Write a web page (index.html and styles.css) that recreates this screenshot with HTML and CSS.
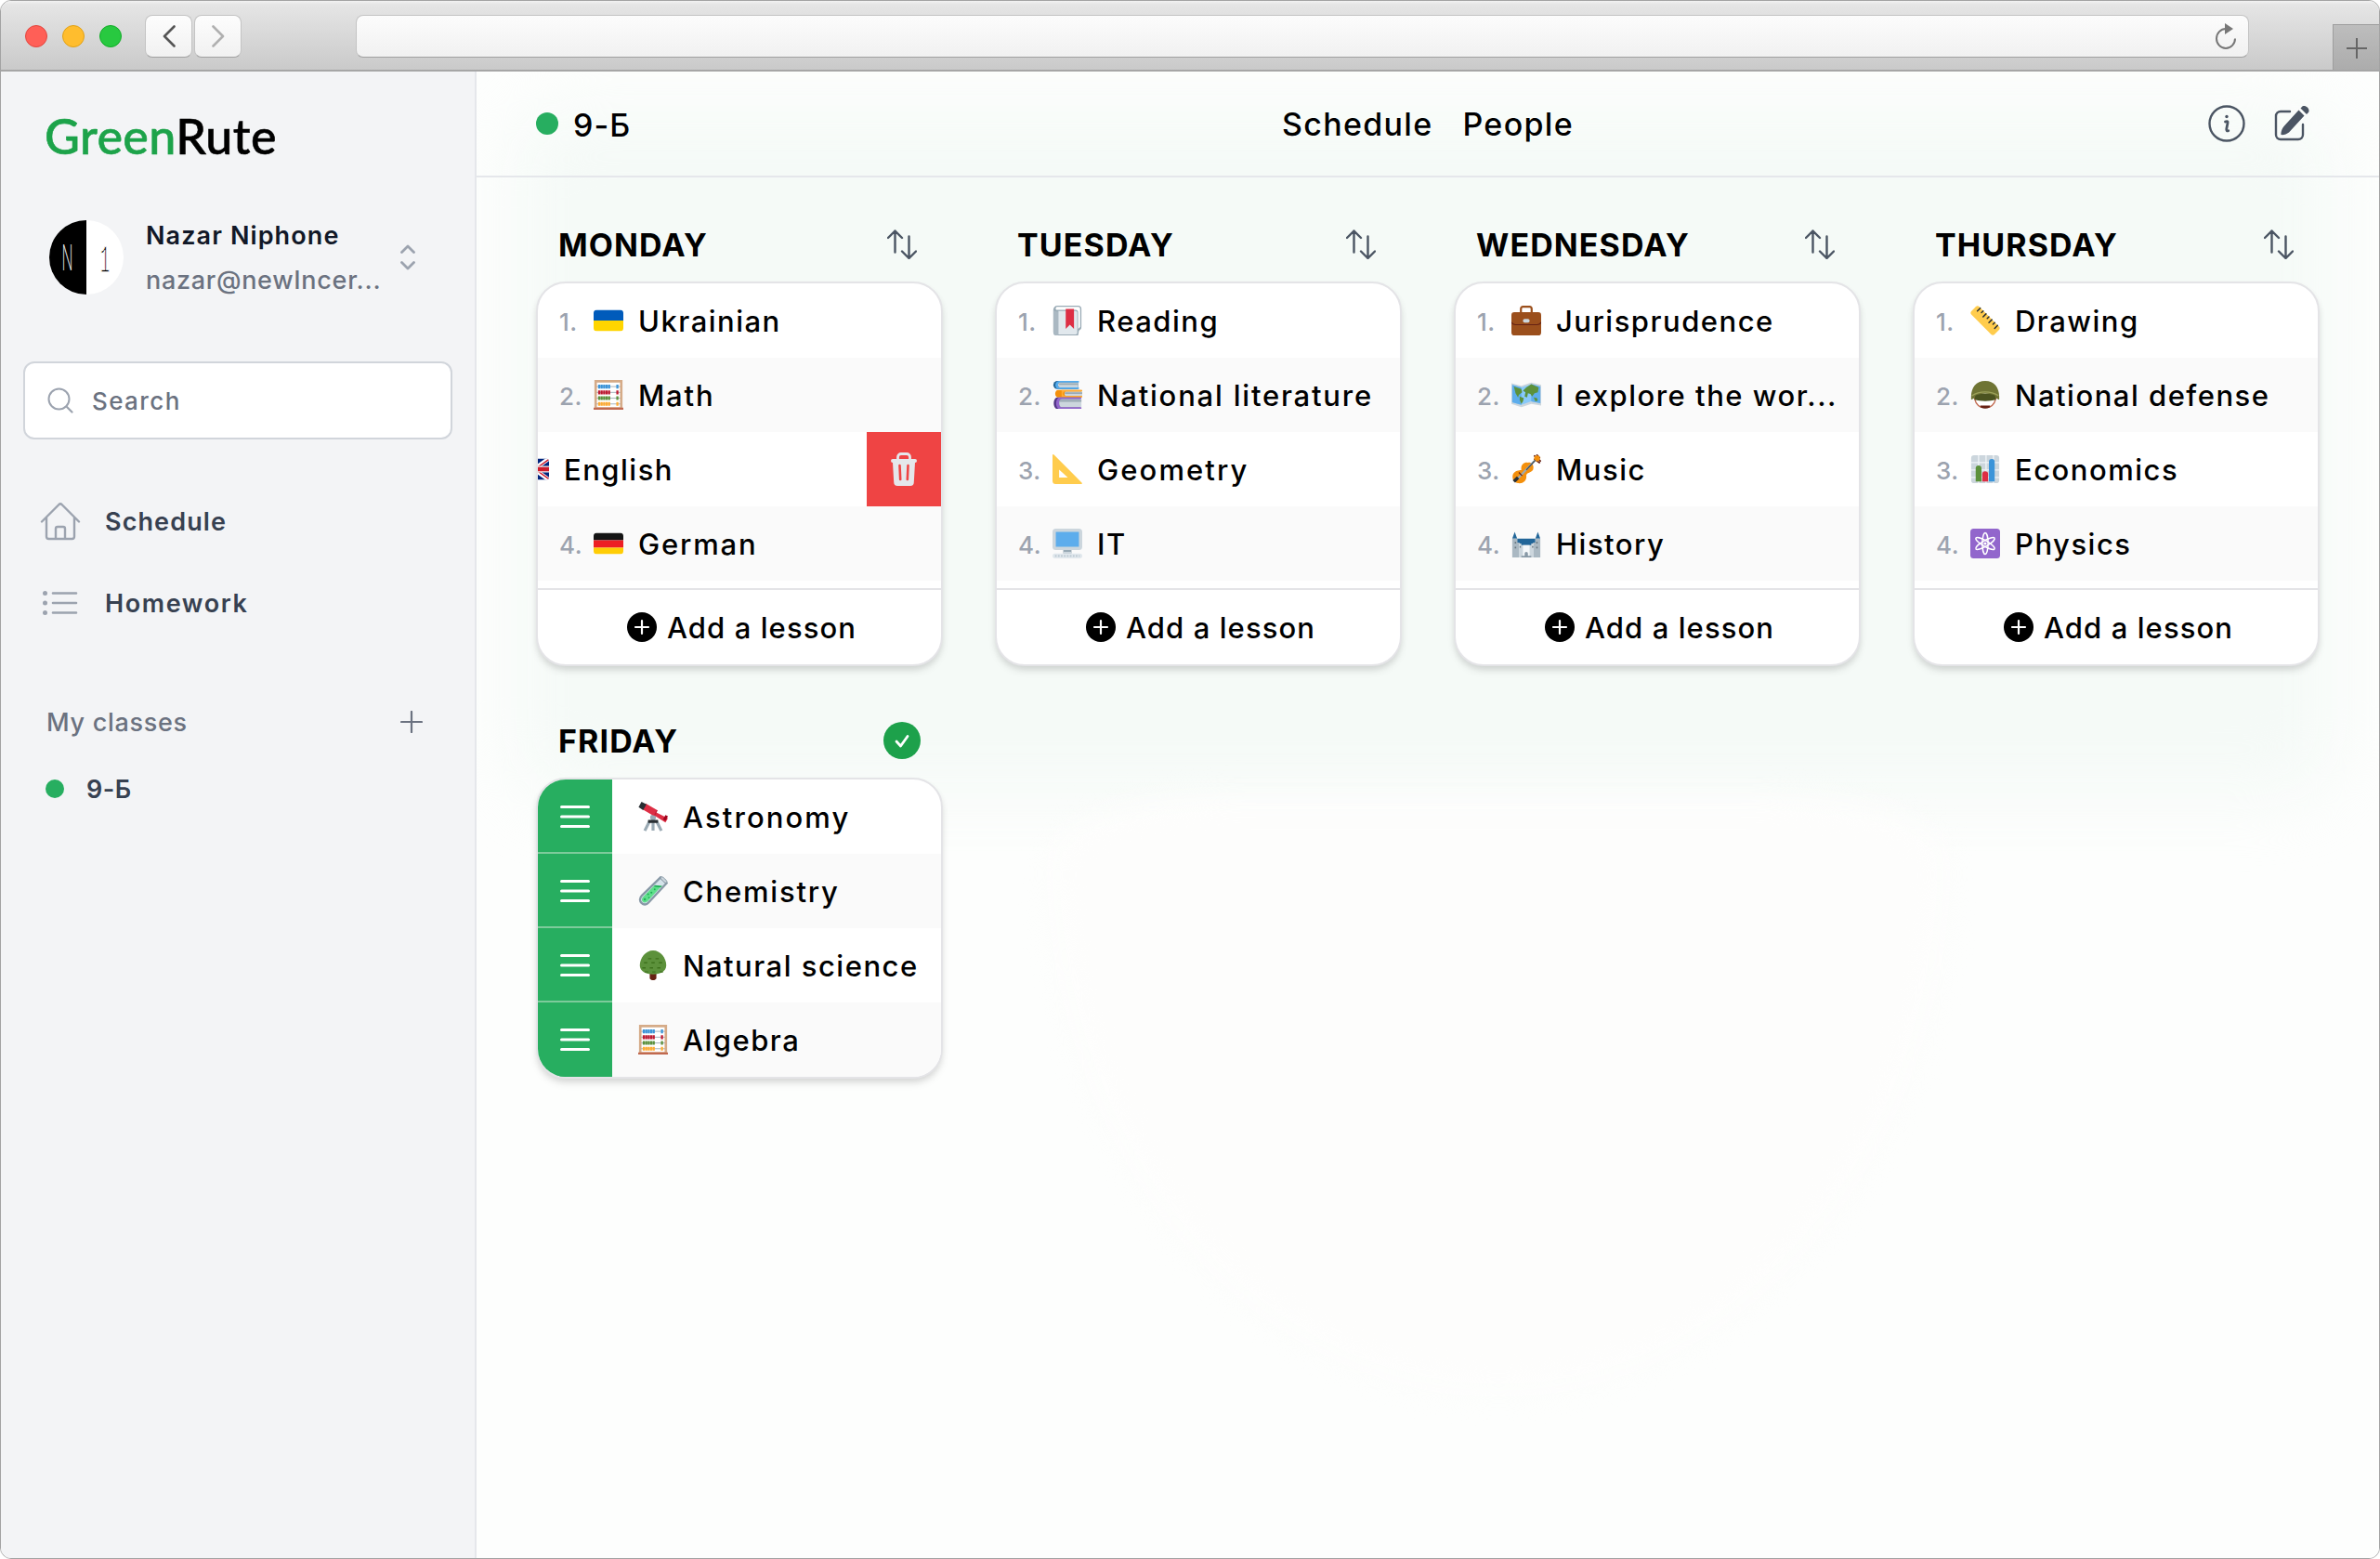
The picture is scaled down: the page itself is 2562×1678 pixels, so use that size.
FILE: index.html
```html
<!DOCTYPE html>
<html lang="en">
<head>
<meta charset="utf-8">
<title>GreenRute</title>
<link rel="stylesheet" href="styles.css">
</head>
<body>
<svg class="sprite" aria-hidden="true">
  <defs>
    <clipPath id="flag"><rect y="5" width="36" height="26" rx="4"/></clipPath>
    <symbol id="ua" viewBox="0 0 36 36"><g clip-path="url(#flag)"><path fill="#005bbb" d="M0 5h36v13H0z"/><path fill="#ffd500" d="M0 18h36v13H0z"/></g></symbol>
    <symbol id="de" viewBox="0 0 36 36"><g clip-path="url(#flag)"><path fill="#141414" d="M0 5h36v9H0z"/><path fill="#ed1f24" d="M0 14h36v9H0z"/><path fill="#ffcd05" d="M0 23h36v8H0z"/></g></symbol>
    <symbol id="gb" viewBox="0 0 36 36"><g clip-path="url(#flag)"><path fill="#00247d" d="M0 5h36v26H0z"/><path stroke="#fff" stroke-width="5" d="M0 5l36 26M36 5L0 31"/><path stroke="#cf1b2b" stroke-width="1.6" d="M0 6l17 12M36 6L19 18M0 30l17-12M36 30L19 18"/><path stroke="#eee" stroke-width="8" d="M18 5v26M0 18h36"/><path stroke="#cf1b2b" stroke-width="5" d="M18 5v26M0 18h36"/></g></symbol>
    <symbol id="abacus" viewBox="0 0 36 36">
      <path fill="#fff" d="M3 3h30v30H3z"/>
      <path stroke="#9aaab4" stroke-width="1" d="M3 8h30M3 15h30M3 22h30M3 29h30"/>
      <path fill="#d5ab88" d="M1 0h34v35H1zM4 3v30h28V3z" fill-rule="evenodd"/>
      <path fill="#c1694f" d="M0 33.500h36V36H0z"/>
      <g stroke-width="4.600" stroke-dasharray="2.600 .400"><path stroke="#3b94d9" d="M5.500 8H20.500M27.500 8h3"/><path stroke="#be1931" d="M5.500 15H20.500M27.500 15h3"/><path stroke="#5c913b" d="M5.500 22H20.500M27.500 22h3"/><path stroke="#ffac33" d="M5.500 29H20.500M27.500 29h3"/></g>
    </symbol>
    <symbol id="bookmark" viewBox="0 0 36 36">
      <path fill="#99aab5" d="M6 0h25a4 4 0 0 1 4 4v22a4 4 0 0 1-3 4l-1 6H5a4 4 0 0 1-4-4V5a5 5 0 0 1 5-5z"/>
      <path fill="#fff" d="M6 1.500h25a2.500 2.500 0 0 1 2.500 2.500v22l-2.500 2V8a3 3 0 0 0-3-3H4.500a2 2 0 0 1 1.500-3.500z"/>
      <path fill="#e1e8ed" d="M7 6.500h21a2 2 0 0 1 2 2V33a2 2 0 0 1-2 2H7z"/><path fill="#aab8c2" d="M1 5c1 2 3 2 6 2v29H5a4 4 0 0 1-4-4z"/>
      <path fill="#dd2e44" d="M16 4h10v24l-5-5-5 5z"/>
    </symbol>
    <symbol id="books" viewBox="0 0 36 36">
      <path fill="#226699" d="M6 1h25v10H6a5 5 0 0 1 0-10z"/><path fill="#55acee" d="M8 1h24v2H9c-3 0-3 6 0 6h23v2H8C2 11 2 1 8 1z"/><path fill="#ccd6dd" d="M9 3h22v6H9c-3 0-3-6 0-6z"/><path fill="#9aaab4" d="M8 4h23v2H8z"/>
      <path fill="#f4900c" d="M7 12h28v9H7c-5 0-5-9 0-9z"/><path fill="#ffac33" d="M11 12h25v2H15c-3 0-3 5 0 5h21v2H11z"/><path fill="#ccd6dd" d="M16 14h20v5H16c-2 0-2-5 0-5z"/><path fill="#9aaab4" d="M15 15h21v2H15z"/>
      <path fill="#553788" d="M6 21h28v14H6c-6 0-6-14 0-14z"/><path fill="#9266cc" d="M9 21h26v2H11c-4 0-4 10 0 10h24v2H9c-6 0-6-14 0-14z"/><path fill="#ccd6dd" d="M11 23h24v10H11c-4 0-4-10 0-10z"/><path fill="#9aaab4" d="M9 24h26v2.500H8.500z"/>
    </symbol>
    <symbol id="triangle" viewBox="0 0 36 36"><path fill="#ffcc4d" fill-rule="evenodd" d="M0 1C0-.2 1-.3 1.800.600l33.600 33.600c.9.900.6 1.800-.6 1.800H4a4 4 0 0 1-4-4zM8 18.500V28h10.500z"/></symbol>
    <symbol id="computer" viewBox="0 0 36 36"><path fill="#99aab5" d="M13 24h10v6H13z"/><rect fill="#ccd6dd" width="36" height="26" rx="4"/><path fill="#5dadec" d="M4 4h28v18H4z"/><path fill="#ccd6dd" d="M13 28h10v2H13z"/><rect y="30" width="36" height="6" rx="3" fill="#e1e8ed"/><path stroke="#b8c5cf" stroke-width="2" stroke-dasharray="2 1.600" d="M3 33h30"/></symbol>
    <symbol id="briefcase" viewBox="0 0 36 36"><path fill="none" stroke="#9b4f1c" stroke-width="2.500" d="M11.500 9V4a2.500 2.500 0 0 1 2.500-2.700h8A2.500 2.500 0 0 1 24.500 4v5"/><rect y="8" width="36" height="28" rx="3.500" fill="#9b4f1c"/><path fill="none" stroke="#662113" stroke-width="1.200" d="M0 20c1 2.500 3 3 5 3h26c2 0 4-.5 5-3"/><rect x="14" y="16" width="8" height="4.500" rx="2" fill="#ccd6dd"/></symbol>
    <symbol id="map" viewBox="0 0 36 36"><path fill="#ccd6dd" d="M0 4l12 3 12-4 12 3v25l-12-2-12 4-12-4z"/><path fill="#88c9f9" d="M1 6l11 3 12-4 11 3v20l-11-2-12 4-11-3z"/><path fill="#5dadec" d="M1 6l11 3v21L1 27zM24 5l11 3v20l-11-2z"/><path fill="#5c913b" d="M3 8l9 3 1 4-4 3-1 3-3-5zM10 20l5 2-1 4-2 3-2-5zM18 9l6-4 9 4-1 6-4 1-3 4-2-3-3-1-1 5-3-1 1-5-3-2zM27 21l4 1 1 3-3 1z"/></symbol>
    <symbol id="violin" viewBox="0 0 36 36"><path stroke="#662113" stroke-width="2" stroke-linecap="round" d="M28 2l7 6M31 1l3 3M28 6l6 4"/><path fill="#f4900c" d="M12 19c-1-6 3-10 8-9 5-1 8 4 6 9-2 3-7 3-8 6 1 7-4 11-10 10-5-1-8-6-6-11 2-4 7-5 10-5z"/><circle cx="31" cy="5" r="3.500" fill="#f4900c"/><path stroke="#99aab5" stroke-width="2.400" d="M7 30L28 8"/><path stroke="#4b545a" stroke-width="1.600" d="M18 19L29 7"/><path stroke="#292f33" stroke-width="4" d="M3 33l5-5"/><path stroke="#662113" stroke-width="1.400" d="M9 22l4 4"/></symbol>
    <symbol id="castle" viewBox="0 0 36 36"><path fill="#269" d="M1 12L4 4l3 8zM29 12l3-8 3 8zM7 12h22v7H7z"/><path fill="#aab8c2" d="M1 12h6v5h3v18H1zM29 12h6v23h-9V17h3z"/><path fill="#ccd6dd" d="M9 18h18v17H9z"/><path fill="#269" d="M12 17h12v3H12z"/><path fill="#f5f8fa" d="M14 20h8v15h-8z"/><path fill="#66757f" d="M4 16h1.800v2H4zM30 16h1.800v2H30zM4 22h1.800v2H4zM30 22h1.800v2H30zM10 21h1.500v2H10zM25 21h1.500v2H25z"/><path fill="#8899a6" d="M16 35v-5a2 2 0 0 1 4 0v5zM12 33h12v2H12z"/></symbol>
    <symbol id="ruler" viewBox="0 0 36 36"><path fill="#ffcc4d" d="M1.500 6.500l5-5c1.500-1.500 3-1.500 4.500 0L34.500 25c1.500 1.500 1.500 3 0 4.500l-5 5c-1.500 1.500-3 1.500-4.500 0L1.500 11c-1.500-1.500-1.500-3 0-4.500z"/><path stroke="#292f33" stroke-width="1.700" stroke-linecap="round" d="M12 3L8.500 6.500M15.500 6.500l-2 2M19 10l-3.500 3.500M22.500 13.500l-2 2M26 17l-3.500 3.500M29.500 20.500l-2 2M33 24l-3.500 3.500"/></symbol>
    <symbol id="helmet" viewBox="0 0 36 36"><path fill="#fff" stroke="#c1694f" stroke-width="1.500" d="M5 19c0 8 4 12 8 14h10c4-2 8-6 8-14"/><path fill="#4b5320" d="M5 17h26v7c-8 2-18 2-26 0z"/><path fill="#6f7434" d="M1 20C1 9 7 1 18 1s17 8 17 19v4l-4-2c-1-3-2-4-3-4-7-2-13-2-20 0-1 0-2 1-3 4l-4 2z"/><path fill="none" stroke="#9ba05a" stroke-width="1.500" d="M2 19c9-6 23-6 32 0"/><path fill="#662113" d="M12 31h12l-1 2.500c-3 1.500-7 1.500-10 0z"/></symbol>
    <symbol id="chart" viewBox="0 0 36 36"><rect x="1" y="1" width="34" height="34" rx="3.500" fill="#ccd6dd"/><path stroke="#f0f4f7" stroke-width="1.500" d="M1 10h34M1 19h34M1 28h34M10 1v34M19 1v34M28 1v34"/><path fill="#5c913b" d="M6.500 33V17a3 3 0 0 1 7 0v16z"/><path fill="#dd2e44" d="M14.500 33v-9a3 3 0 0 1 7 0v9z"/><path fill="#3b94d9" d="M22.500 33V9a3 3 0 0 1 7 0v24z"/></symbol>
    <symbol id="atom" viewBox="0 0 36 36"><rect width="36" height="36" rx="4" fill="#9266cc"/><g fill="none" stroke="#fff" stroke-width="1.700"><ellipse cx="18" cy="18" rx="3.500" ry="13"/><ellipse cx="18" cy="18" rx="3.500" ry="13" transform="rotate(60 18 18)"/><ellipse cx="18" cy="18" rx="3.500" ry="13" transform="rotate(120 18 18)"/></g><circle cx="18" cy="18" r="1.800" fill="#fff"/></symbol>
    <symbol id="telescope" viewBox="0 0 36 36"><path stroke="#9aaab4" stroke-width="3.600" d="M14 23L8 35M18 22v13M22 23l6 12"/><circle cx="18" cy="19" r="3.500" fill="#9aaab4"/><path fill="#292f33" d="M12 22h12v3.500H12z"/><path fill="#dd2e44" d="M9 2l14 8-1 3 14 7-3 5-13-8-3-1-12-7z"/><path fill="#a0041e" d="M33 16l3 1.500-3 5.500-3-1.500z"/><path stroke="#be1931" stroke-width="1.200" d="M23 10l-3 6"/><path fill="#292f33" d="M4 0l6 3-4 7-5.500-3.500z"/></symbol>
    <symbol id="tube" viewBox="0 0 36 36"><path fill="#d5e3ea" stroke="#8899a6" stroke-width="2.600" d="M27 1.500l7.500 7-22 23.500c-2.500 3-6 3-8.500.500s-2.500-6 .500-9z"/><path fill="#5fdf8b" d="M18.500 12.500c3-1 6 1 9.500 0L11.500 30.500c-2 2-4.500 2-6 .500s-1.500-4 .500-6z"/><path fill="#1faf56" d="M18.500 12.500l2-1.500 8.500.8-1.500 1.700c-3 .5-6-.5-9-1z"/><g fill="#1faf56"><circle cx="8" cy="28" r="1.400"/><circle cx="12" cy="22" r="1.200"/><circle cx="16" cy="20" r="1.200"/><circle cx="13" cy="26" r="1"/><circle cx="20" cy="16" r="1.100"/></g><ellipse cx="31" cy="4.500" rx="5" ry="1.800" transform="rotate(43 31 4.500)" fill="#ccd6dd" stroke="#8899a6"/></symbol>
    <symbol id="tree" viewBox="0 0 36 36"><path fill="#662113" d="M14 26h8v8c-2 3-6 3-8 0z"/><path fill="#5c913b" d="M18 0c9 0 16 9 16 18 0 7-7 11-16 11S2 25 2 18C2 9 9 0 18 0z"/><path fill="none" stroke="#3e721d" stroke-width="1.600" stroke-dasharray="4 5" d="M12 10h14M7 15h24M5 21h26M8 26h22"/></symbol>
    <symbol id="sort" viewBox="0 0 32 32"><path d="M8.500 24.500V1.500M1 9l7.500-7.500L16 9M23.500 7.500V31M16 23.500l7.500 7.500 7.500-7.500"/></symbol>
    <symbol id="plus-circle" viewBox="0 0 32 32"><circle cx="16" cy="16" r="16"/><path stroke="#fff" stroke-width="2.200" stroke-linecap="round" d="M16 9v14M9 16h14"/></symbol>
    <symbol id="menu" viewBox="0 0 32 26"><path stroke="#fff" stroke-width="3" stroke-linecap="round" d="M1.500 2.500h29M1.500 13h29M1.500 23.500h29"/></symbol>
  </defs>
</svg>

<div class="window">
  <div class="toolbar">
    <div class="lights"><span class="light red"></span><span class="light amber"></span><span class="light green"></span></div>
    <div class="history">
      <span class="key"><svg width="14" height="24" viewBox="0 0 14 24"><path fill="none" stroke="#555" stroke-width="2.600" stroke-linecap="round" stroke-linejoin="round" d="M12.500 1.500L2 12l10.500 10.500"/></svg></span>
      <span class="key"><svg width="14" height="24" viewBox="0 0 14 24"><path fill="none" stroke="#b0b0b0" stroke-width="2.600" stroke-linecap="round" stroke-linejoin="round" d="M1.500 1.500L12 12 1.500 22.500"/></svg></span>
    </div>
    <div class="address"><svg width="24" height="28" viewBox="0 0 24 28"><path fill="none" stroke="#777" stroke-width="2" d="M12 6A10 10.500 0 1 0 22 16.500"/><path fill="#777" d="M11 0l9 6-9 6z"/></svg></div>
    <div class="newtab"><svg width="22" height="22" viewBox="0 0 22 22"><path stroke="#666" stroke-width="2" d="M11 0v22M0 11h22"/></svg></div>
  </div>

  <div class="app">
    <aside class="sidebar">
      <div class="logo"><span>Green</span>Rute</div>
      <div class="user">
        <svg class="avatar" viewBox="0 0 80 80"><circle cx="40" cy="40" r="40" fill="#fff"/><path d="M40 0a40 40 0 0 0 0 80z"/><text x="13.500" y="54" font-family="Inter" font-weight="200" font-size="38" fill="#fff" textLength="12" lengthAdjust="spacingAndGlyphs">N</text><text x="55" y="55.500" font-family="Liberation Mono" font-weight="400" font-size="43" textLength="10" lengthAdjust="spacingAndGlyphs" stroke="#fff" stroke-width="1.600">1</text></svg>
        <div class="who"><span class="name">Nazar Niphone</span><span class="mail">nazar@newIncer...</span></div>
        <svg width="16" height="28" viewBox="0 0 16 28"><path class="line muted" stroke-width="2.800" d="M1.500 8.500L8 2l6.500 6.500M1.500 19.500L8 26l6.500-6.500"/></svg>
      </div>
      <div class="search"><svg width="28" height="28" viewBox="0 0 28 28"><circle class="line muted" stroke-width="2" cx="12.500" cy="12.500" r="11"/><path class="line muted" stroke-width="2.200" d="M20.500 20.500l6 6"/></svg><span>Search</span></div>
      <nav class="menu">
        <a><svg width="44" height="42" viewBox="0 0 44 42"><path class="line muted" stroke-width="2.400" d="M2 21.500L20.500 3a2.200 2.200 0 0 1 3 0L42 21.500M7 17v20.500A2.500 2.500 0 0 0 9.500 40h25a2.500 2.500 0 0 0 2.500-2.500V17M17 40V29a2 2 0 0 1 2-2h6a2 2 0 0 1 2 2v11"/></svg><span>Schedule</span></a>
        <a><svg width="44" height="28" viewBox="0 0 44 28"><path class="line muted" stroke-width="2.600" d="M14 3.500h25M14 14h25M14 24.500h25"/><g fill="#9ca3af"><circle cx="5.500" cy="3.500" r="2.500"/><circle cx="5.500" cy="14" r="2.500"/><circle cx="5.500" cy="24.500" r="2.500"/></g></svg><span class="wide">Homework</span></a>
      </nav>
      <div class="classes-title"><span>My classes</span><svg width="24" height="24" viewBox="0 0 24 24"><path class="line" stroke="#6b7280" stroke-width="2.200" d="M12 1v22M1 12h22"/></svg></div>
      <div class="class-item"><i class="dot"></i><span>9-Б</span></div>
    </aside>

    <main class="main">
      <header class="header">
        <div class="current"><i class="dot"></i><span>9-Б</span></div>
        <nav class="tabs"><a>Schedule</a><a>People</a></nav>
        <div class="actions">
          <svg width="40" height="40" viewBox="0 0 40 40"><circle class="line slate" stroke-width="2.400" cx="20" cy="20" r="18.500"/><circle cx="20" cy="12.500" r="1.700" fill="#4b5563"/><path class="line slate" stroke-width="2.800" d="M18.500 18c2-1 3-.3 2.500 1.500l-1.200 6c-.4 2.200.6 2.700 2 2.200"/></svg>
          <svg width="40" height="40" viewBox="0 0 40 40"><path class="line slate" stroke-width="2.400" d="M18 7H8a5 5 0 0 0-5 5v20a5 5 0 0 0 5 5h19a5 5 0 0 0 5-5V21"/><path fill="#4b5563" d="M27.500 5.500l6 6L17 29.500c-2.500 2-6 3-8.500 2.500-.5-2.500 1-6.500 3-9zM29.500 3.500l1-1c3-4 10 1.500 7.500 5.500l-2 2z"/></svg>
        </div>
      </header>

      <div class="board">
        <section class="day">
          <div class="day-head"><h2>MONDAY</h2><svg class="sort"><use href="#sort"/></svg></div>
          <div class="card">
            <div class="row"><b>1.</b><svg><use href="#ua"/></svg><span>Ukrainian</span></div>
            <div class="row"><b>2.</b><svg><use href="#abacus"/></svg><span class="wide">Math</span></div>
            <div class="row swiped"><b>3.</b><svg><use href="#gb"/></svg><span>English</span>
              <div class="delete"><svg viewBox="0 0 28 36"><path fill="none" stroke="#e5e7eb" stroke-width="2.800" d="M7.500 8V5a3.500 3.500 0 0 1 3.500-3.500h6A3.500 3.500 0 0 1 20.500 5v3"/><path fill="#e5e7eb" d="M2 7h24a2 2 0 0 1 0 4l-1.200 21a4 4 0 0 1-4 4H7.200a4 4 0 0 1-4-4L2 11a2 2 0 0 1 0-4z"/><path stroke="#ef4444" stroke-width="2.600" stroke-linecap="round" d="M9.500 14l.7 15M18.500 14l-.7 15"/></svg></div>
            </div>
            <div class="row"><b>4.</b><svg><use href="#de"/></svg><span class="wide">German</span></div>
            <div class="add"><svg><use href="#plus-circle"/></svg><span>Add a lesson</span></div>
          </div>
        </section>
        <section class="day">
          <div class="day-head"><h2>TUESDAY</h2><svg class="sort"><use href="#sort"/></svg></div>
          <div class="card">
            <div class="row"><b>1.</b><svg><use href="#bookmark"/></svg><span>Reading</span></div>
            <div class="row"><b>2.</b><svg><use href="#books"/></svg><span class="wide">National literature</span></div>
            <div class="row"><b>3.</b><svg><use href="#triangle"/></svg><span class="wider">Geometry</span></div>
            <div class="row"><b>4.</b><svg><use href="#computer"/></svg><span>IT</span></div>
            <div class="add"><svg><use href="#plus-circle"/></svg><span>Add a lesson</span></div>
          </div>
        </section>
        <section class="day">
          <div class="day-head"><h2>WEDNESDAY</h2><svg class="sort"><use href="#sort"/></svg></div>
          <div class="card">
            <div class="row"><b>1.</b><svg><use href="#briefcase"/></svg><span>Jurisprudence</span></div>
            <div class="row"><b>2.</b><svg><use href="#map"/></svg><span>I explore the wor...</span></div>
            <div class="row"><b>3.</b><svg><use href="#violin"/></svg><span>Music</span></div>
            <div class="row"><b>4.</b><svg><use href="#castle"/></svg><span>History</span></div>
            <div class="add"><svg><use href="#plus-circle"/></svg><span>Add a lesson</span></div>
          </div>
        </section>
        <section class="day">
          <div class="day-head"><h2>THURSDAY</h2><svg class="sort"><use href="#sort"/></svg></div>
          <div class="card">
            <div class="row"><b>1.</b><svg><use href="#ruler"/></svg><span>Drawing</span></div>
            <div class="row"><b>2.</b><svg><use href="#helmet"/></svg><span>National defense</span></div>
            <div class="row"><b>3.</b><svg><use href="#chart"/></svg><span>Economics</span></div>
            <div class="row"><b>4.</b><svg><use href="#atom"/></svg><span>Physics</span></div>
            <div class="add"><svg><use href="#plus-circle"/></svg><span>Add a lesson</span></div>
          </div>
        </section>
        <section class="day">
          <div class="day-head"><h2>FRIDAY</h2><svg class="done" viewBox="0 0 40 40"><circle cx="20" cy="20" r="20" fill="#1da14b"/><path fill="none" stroke="#fff" stroke-width="2.800" stroke-linecap="round" stroke-linejoin="round" d="M14 21l4.500 5L26 15.500"/></svg></div>
          <div class="card editing">
            <div class="row"><div class="handle"><svg><use href="#menu"/></svg></div><svg><use href="#telescope"/></svg><span class="wider">Astronomy</span></div>
            <div class="row"><div class="handle"><svg><use href="#menu"/></svg></div><svg><use href="#tube"/></svg><span class="wide">Chemistry</span></div>
            <div class="row"><div class="handle"><svg><use href="#menu"/></svg></div><svg><use href="#tree"/></svg><span>Natural science</span></div>
            <div class="row"><div class="handle"><svg><use href="#menu"/></svg></div><svg><use href="#abacus"/></svg><span>Algebra</span></div>
          </div>
        </section>
      </div>
    </main>
  </div>
</div>
</body>
</html>
```

FILE: styles.css
```css
* { box-sizing: border-box; }
body { margin: 0; background: #fff; font-family: Inter, "Noto Sans", sans-serif; color: #000; }
svg { display: block; flex: none; }
.sprite { position: absolute; width: 0; height: 0; }
.line { fill: none; stroke-linecap: round; stroke-linejoin: round; }
.muted { stroke: #9ca3af; }
.slate { stroke: #4b5563; }

.window { width: 2562px; height: 1678px; display: flex; flex-direction: column; border: 1px solid #a3a3a3; border-radius: 12px; overflow: hidden; }

/* browser toolbar */
.toolbar { height: 76px; flex: none; display: flex; align-items: center; padding-top: 2px; border-bottom: 2px solid #a6a6a6; background: linear-gradient(#f2f2f2 0, #e5e5e5 4px, #cacaca 100%); }
.lights { display: flex; gap: 16px; padding-left: 26px; }
.light { width: 24px; height: 24px; border-radius: 50%; border: 1px solid; }
.red { background: #ff5f57; border-color: #e2463f; }
.amber { background: #ffbd2e; border-color: #e1a116; }
.green { background: #28c940; border-color: #12ac28; }
.history { display: flex; gap: 2px; margin-left: 25px; }
.key { width: 51px; height: 46px; display: flex; align-items: center; justify-content: center; border-radius: 8px; background: linear-gradient(#fdfdfd, #f1f1f1); border: 1px solid #c4c4c4; border-bottom-color: #a0a0a0; }
.address { width: 2038px; height: 46px; margin-left: 123px; padding-right: 12px; display: flex; align-items: center; justify-content: flex-end; border-radius: 8px; background: linear-gradient(#fcfcfc, #f1f1f1); border: 1px solid #c4c4c4; border-bottom-color: #a0a0a0; }
.newtab { width: 50px; align-self: stretch; margin: 23px 0 0 auto; padding-top: 2px; display: flex; align-items: center; justify-content: center; background: linear-gradient(#bdbdbd, #acacac); border: 1px solid #9e9e9e; border-width: 1px 0 0 1px; }

.app { flex: 1; display: flex; min-height: 0; }

/* sidebar */
.sidebar { width: 512px; flex: none; padding: 39px 24px 0; background: #f3f4f6; border-right: 2px solid #e5e7eb; font-weight: 500; font-size: 27px; }
.logo { padding-left: 23px; font: 500 52px/60px Lato, sans-serif; letter-spacing: .4px; -webkit-text-stroke: .6px; }
.logo span { color: #1da34a; }
.user { margin: 53px 40px 0 28px; height: 96px; display: flex; align-items: center; }
.avatar { width: 80px; height: 80px; }
.who { flex: 1; margin-left: 24px; padding-top: 1px; display: flex; flex-direction: column; line-height: 48px; white-space: nowrap; }
.name { color: #111827; font-weight: 600; letter-spacing: 1.1px; }
.mail { color: #6b7280; letter-spacing: .7px; }
.search { height: 84px; margin-top: 64px; padding-left: 24px; display: flex; align-items: center; gap: 20px; background: #fff; border: 2px solid #d1d5db; border-radius: 12px; color: #6b7280; font-size: 26px; letter-spacing: 1.4px; font-weight: 450; }
.menu { margin-top: 44px; font-weight: 600; color: #374151; letter-spacing: 1.1px; }
.menu a { height: 88px; padding-left: 18px; display: flex; align-items: center; gap: 26px; }
.menu .wide { letter-spacing: 1.6px; }
.classes-title { height: 64px; margin-top: 52px; padding: 0 32px 0 25px; display: flex; align-items: center; justify-content: space-between; color: #6b7280; letter-spacing: .7px; }
.class-item { height: 80px; padding-left: 24px; display: flex; align-items: center; gap: 24px; color: #374151; font-weight: 600; letter-spacing: .5px; }
.dot { width: 20px; height: 20px; border-radius: 50%; background: #27ae60; }

/* main area */
.main { flex: 1; position: relative; overflow: hidden; background: #fdfefd; }
.main::before { content: ""; position: absolute; left: 40px; top: 40px; width: 1960px; height: 740px; border-radius: 60px; background: #f5faf7; filter: blur(34px); }
.main::after { content: ""; position: absolute; left: 620px; top: 780px; width: 960px; height: 640px; border-radius: 20% 20% 50% 50% / 10% 10% 90% 90%; background: #fdfdfc; filter: blur(16px); }
.header { position: relative; height: 114px; padding: 0 74px 0 64px; display: grid; grid-template-columns: 1fr auto 1fr; align-items: center; border-bottom: 2px solid #e5e7eb; }
.current { display: flex; align-items: center; gap: 16px; font-size: 34px; font-weight: 450; letter-spacing: 1px; }
.current span { padding-top: 2px; }
.current .dot { width: 24px; height: 24px; }
.tabs { display: flex; gap: 32px; padding-left: 10px; font-size: 34px; font-weight: 450; letter-spacing: 1.3px; }
.actions { display: flex; gap: 30px; justify-content: flex-end; }

.board { position: relative; z-index: 1; padding: 40px 64px; display: grid; grid-template-columns: repeat(4, 438px); gap: 48px 56px; }
.day-head { height: 64px; margin-bottom: 8px; padding: 0 24px; display: flex; align-items: center; justify-content: space-between; }
h2 { margin: 0; font-size: 34px; font-weight: 700; letter-spacing: 1.1px; }
.sort { width: 32px; height: 32px; margin-right: 4px; fill: none; stroke: #4b5563; stroke-width: 2.400; stroke-linecap: round; stroke-linejoin: round; }
.done { width: 40px; height: 40px; }
.card { border: 2px solid #e4e4e7; border-radius: 32px; overflow: hidden; background: #fff; box-shadow: 0 6px 10px -2px rgba(0, 0, 0, .13), 0 3px 6px rgba(0, 0, 0, .05); font-size: 31px; font-weight: 450; letter-spacing: 1.5px; }
.row { height: 80px; padding: 0 16px 0 23px; display: flex; align-items: center; white-space: nowrap; }
.row:nth-child(even) { background: #fafafa; }
.row b { width: 37px; flex: none; padding-top: 2px; color: #9ca3af; font-size: 26px; font-weight: 450; letter-spacing: .5px; }
.row > svg, .add svg { width: 32px; height: 32px; }
.row > span { margin-left: 16px; }
.row .wide { letter-spacing: 1.8px; }
.row .wider { letter-spacing: 2.1px; }
.swiped { position: relative; padding-left: 0; }
.swiped b { width: 0; margin-left: -20px; visibility: hidden; }
.delete { position: absolute; right: 0; top: 0; width: 80px; height: 80px; display: flex; align-items: center; justify-content: center; background: #ef4444; }
.delete svg { width: 28px; height: 36px; }
.add { height: 82px; margin-top: 8px; padding-left: 5px; display: flex; align-items: center; justify-content: center; gap: 11px; border-top: 2px solid #e4e4e7; letter-spacing: 1.1px; }
.editing .row { padding-left: 0; }
.handle { width: 80px; height: 80px; margin-right: 28px; padding-top: 1px; display: flex; align-items: center; justify-content: center; background: #27ae60; border-bottom: 2px solid #7dcb9b; }
.row:last-child .handle { border-bottom-color: #27ae60; }
.handle svg { width: 32px; height: 26px; }
```
